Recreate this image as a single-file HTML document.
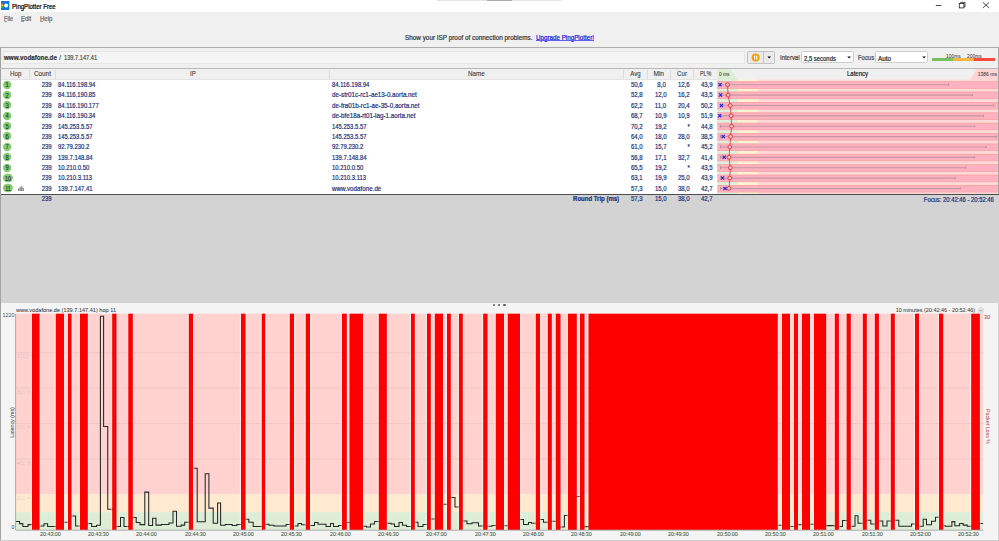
<!DOCTYPE html>
<html><head><meta charset="utf-8"><style>
html,body{margin:0;padding:0;width:999px;height:541px;overflow:hidden;background:#f0f0f0;font-family:"Liberation Sans", sans-serif;}
.b{position:absolute;}
.t{position:absolute;white-space:nowrap;font-family:"Liberation Sans", sans-serif;}
</style></head><body>
<div class="b" style="left:0px;top:0px;width:999px;height:11.5px;background:#fff"></div>
<div class="b" style="left:0px;top:11.5px;width:999px;height:291px;background:#f0f0f0"></div>
<div class="b" style="left:437px;top:0px;width:125px;height:1px;background:#e6e6e6"></div>
<div class="b" style="left:487px;top:0px;width:25px;height:1px;background:#a8a8a8"></div>
<svg class="b" style="left:1px;top:1px" width="9" height="9" viewBox="0 0 9 9"><rect x="0" y="0" width="8.3" height="9" fill="#0c78d8"/><path d="M0 2.1 H2.6 L2.2 3.4 H0 Z" fill="#e0402a"/><rect x="0" y="3.4" width="2.3" height="1.6" fill="#f0c000"/><path d="M0 5 H2.2 L2.6 6.8 H0 Z" fill="#50c020"/><circle cx="5.1" cy="4.6" r="2.0" fill="#fff"/></svg>
<div class="t" style="left:12px;top:3.00px;font-size:7px;line-height:8.40px;color:#000;font-weight:normal;transform-origin:0 50%;transform:scaleX(0.8647);-webkit-text-stroke:0.22px #000;">PingPlotter Free</div>
<svg class="b" style="left:930px;top:0" width="69" height="11" viewBox="0 0 69 11"><line x1="5.8" y1="5.5" x2="11.3" y2="5.5" stroke="#222" stroke-width="0.8"/><rect x="29.3" y="3.4" width="4.6" height="4.5" fill="none" stroke="#222" stroke-width="0.8"/><path d="M30.6 3.4 V2.4 H35 V6.8 H33.9" fill="none" stroke="#222" stroke-width="0.8"/><path d="M52.8 2.4 L59.2 7.9 M59.2 2.4 L52.8 7.9" stroke="#222" stroke-width="0.8"/></svg>
<div class="t" style="left:3.9px;top:15.00px;font-size:6.8px;line-height:8.16px;color:#666;font-weight:normal;transform-origin:0 50%;transform:scaleX(0.8217);-webkit-text-stroke:0.2px #666;">File</div>
<div class="b" style="left:3.9px;top:20.6px;width:3.4px;height:0.7px;background:#999"></div>
<div class="t" style="left:21px;top:15.00px;font-size:6.8px;line-height:8.16px;color:#666;font-weight:normal;transform-origin:0 50%;transform:scaleX(0.8704);-webkit-text-stroke:0.2px #666;">Edit</div>
<div class="b" style="left:21px;top:20.6px;width:3.4px;height:0.7px;background:#999"></div>
<div class="t" style="left:39.6px;top:15.00px;font-size:6.8px;line-height:8.16px;color:#666;font-weight:normal;transform-origin:0 50%;transform:scaleX(0.8867);-webkit-text-stroke:0.2px #666;">Help</div>
<div class="b" style="left:39.6px;top:20.6px;width:3.8px;height:0.7px;background:#999"></div>
<div class="t" style="left:404.9px;top:34.00px;font-size:6.8px;line-height:8.16px;color:#333;font-weight:normal;transform-origin:0 50%;transform:scaleX(0.9356);-webkit-text-stroke:0.2px #333;">Show your ISP proof of connection problems.</div>
<div class="t" style="left:535.6px;top:34.00px;font-size:6.8px;line-height:8.16px;color:#1010e0;font-weight:normal;transform-origin:0 50%;transform:scaleX(0.9190);-webkit-text-stroke:0.2px #1010e0;">Upgrade PingPlotter!</div>
<div class="b" style="left:535.6px;top:39.6px;width:58px;height:0.5px;background:#6060f0"></div>
<div class="b" style="left:0px;top:47px;width:999px;height:0.8px;background:#acacac"></div>
<div class="b" style="left:0px;top:47px;width:1.1px;height:256.2px;background:#a4a4a4"></div>
<div class="b" style="left:3px;top:51px;width:742px;height:13px;background:#f4f4f4;border:0.6px solid #e6e6e6;box-sizing:border-box"></div>
<div class="t" style="left:4.2px;top:54.00px;font-size:6.8px;line-height:8.16px;color:#333;font-weight:bold;transform-origin:0 50%;transform:scaleX(0.9195);-webkit-text-stroke:0.2px #333;">www.vodafone.de</div>
<div class="t" style="left:59.2px;top:54.00px;font-size:6.8px;line-height:8.16px;color:#666;font-weight:normal;transform-origin:0 50%;transform:scaleX(1.1107);-webkit-text-stroke:0.2px #666;">/</div>
<div class="t" style="left:63.7px;top:54.00px;font-size:6.8px;line-height:8.16px;color:#505050;font-weight:normal;transform-origin:0 50%;transform:scaleX(0.8340);-webkit-text-stroke:0.2px #505050;">139.7.147.41</div>
<div class="b" style="left:747.0px;top:51.2px;width:27.8px;height:12.4px;background:#ebebeb;border:0.8px solid #c2c2c2;border-radius:1.5px;box-sizing:border-box"></div>
<div class="b" style="left:763.2px;top:51.5px;width:0.8px;height:11.8px;background:#c4c4c4"></div>
<svg class="b" style="left:750px;top:52px" width="24" height="11" viewBox="0 0 24 11"><circle cx="5.6" cy="5.6" r="4" fill="#f59c0c"/><rect x="4.0" y="3.6" width="1.1" height="4" fill="#fff"/><rect x="6.2" y="3.6" width="1.1" height="4" fill="#fff"/><path d="M17.4 4.6 H21.0 L19.2 6.6 Z" fill="#000"/></svg>
<div class="t" style="left:779.7px;top:54.00px;font-size:6.8px;line-height:8.16px;color:#444;font-weight:normal;transform-origin:0 50%;transform:scaleX(0.8746);-webkit-text-stroke:0.2px #444;">Interval</div>
<div class="b" style="left:801.2px;top:51.3px;width:52.5px;height:12px;background:#fff;border:0.7px solid #cdcdcd;border-radius:1.5px;box-sizing:border-box"></div>
<div class="t" style="left:803.8px;top:55.00px;font-size:6.8px;line-height:8.16px;color:#222;font-weight:normal;transform-origin:0 50%;transform:scaleX(0.8702);-webkit-text-stroke:0.2px #222;">2,5 seconds</div>
<svg class="b" style="left:846px;top:55px" width="6" height="5" viewBox="0 0 6 5"><path d="M1.3 1.6 H4.9 L3.1 3.6 Z" fill="#111"/></svg>
<div class="t" style="left:857.8px;top:54.00px;font-size:6.8px;line-height:8.16px;color:#444;font-weight:normal;transform-origin:0 50%;transform:scaleX(0.8695);-webkit-text-stroke:0.2px #444;">Focus</div>
<div class="b" style="left:875.4px;top:51.4px;width:53px;height:12px;background:#fff;border:0.7px solid #cdcdcd;border-radius:1.5px;box-sizing:border-box"></div>
<div class="t" style="left:877.6px;top:55.00px;font-size:6.8px;line-height:8.16px;color:#222;font-weight:normal;transform-origin:0 50%;transform:scaleX(0.9296);-webkit-text-stroke:0.2px #222;">Auto</div>
<svg class="b" style="left:920.5px;top:55px" width="6" height="5" viewBox="0 0 6 5"><path d="M1.3 1.6 H4.9 L3.1 3.6 Z" fill="#111"/></svg>
<div class="b" style="left:932.3px;top:57.9px;width:20.9px;height:3.4px;background:#78c060"></div>
<div class="b" style="left:953.2px;top:57.9px;width:21px;height:3.4px;background:#fbb440"></div>
<div class="b" style="left:974.2px;top:57.9px;width:20.8px;height:3.4px;background:#f84a40"></div>
<div class="t" style="left:946px;top:53.00px;font-size:5.0px;line-height:6.00px;color:#444;font-weight:normal;transform-origin:0 50%;transform:scaleX(0.9790);-webkit-text-stroke:0.05px #444;">100ms</div>
<div class="t" style="left:966.5px;top:53.00px;font-size:5.0px;line-height:6.00px;color:#444;font-weight:normal;transform-origin:0 50%;transform:scaleX(0.9790);-webkit-text-stroke:0.05px #444;">200ms</div>
<div class="b" style="left:0px;top:68px;width:999px;height:0.9px;background:#b8b8b8"></div>
<div class="b" style="left:1.2px;top:69.1px;width:997.8px;height:10.6px;background:#f0f0f0"></div>
<div class="b" style="left:1.2px;top:79.7px;width:716px;height:114.5px;background:#fff"></div>
<div class="b" style="left:29.2px;top:69.5px;width:0.7px;height:10px;background:#dcdcdc"></div>
<div class="b" style="left:55.2px;top:69.5px;width:0.7px;height:10px;background:#dcdcdc"></div>
<div class="b" style="left:329.2px;top:69.5px;width:0.7px;height:10px;background:#dcdcdc"></div>
<div class="b" style="left:623.1px;top:69.5px;width:0.7px;height:10px;background:#dcdcdc"></div>
<div class="b" style="left:647.1px;top:69.5px;width:0.7px;height:10px;background:#dcdcdc"></div>
<div class="b" style="left:670.2px;top:69.5px;width:0.7px;height:10px;background:#dcdcdc"></div>
<div class="b" style="left:693.3px;top:69.5px;width:0.7px;height:10px;background:#dcdcdc"></div>
<div class="b" style="left:1.2px;top:79.4px;width:716px;height:0.5px;background:#e4e4e4"></div>
<div class="t" style="left:9.6px;top:70.00px;font-size:6.8px;line-height:8.16px;color:#3a3a3a;font-weight:normal;transform-origin:0 50%;transform:scaleX(0.9143);-webkit-text-stroke:0.1px #3a3a3a;">Hop</div>
<div class="t" style="left:33.6px;top:70.00px;font-size:6.8px;line-height:8.16px;color:#3a3a3a;font-weight:normal;transform-origin:0 50%;transform:scaleX(0.9316);-webkit-text-stroke:0.1px #3a3a3a;">Count</div>
<div class="t" style="left:-7.50px;width:400px;text-align:center;top:70.00px;font-size:6.8px;line-height:8.16px;color:#3a3a3a;font-weight:normal;transform-origin:50% 50%;transform:scaleX(0.9000);-webkit-text-stroke:0.1px #3a3a3a;">IP</div>
<div class="t" style="left:467.5px;top:70.00px;font-size:6.8px;line-height:8.16px;color:#3a3a3a;font-weight:normal;transform-origin:0 50%;transform:scaleX(0.9233);-webkit-text-stroke:0.1px #3a3a3a;">Name</div>
<div class="t" style="right:358.50px;top:70.00px;font-size:6.8px;line-height:8.16px;color:#3a3a3a;font-weight:normal;transform-origin:100% 50%;transform:scaleX(0.8884);-webkit-text-stroke:0.1px #3a3a3a;">Avg</div>
<div class="t" style="right:335.00px;top:70.00px;font-size:6.8px;line-height:8.16px;color:#3a3a3a;font-weight:normal;transform-origin:100% 50%;transform:scaleX(0.9586);-webkit-text-stroke:0.1px #3a3a3a;">Min</div>
<div class="t" style="right:311.90px;top:70.00px;font-size:6.8px;line-height:8.16px;color:#3a3a3a;font-weight:normal;transform-origin:100% 50%;transform:scaleX(0.9039);-webkit-text-stroke:0.1px #3a3a3a;">Cur</div>
<div class="t" style="right:287.60px;top:70.00px;font-size:6.8px;line-height:8.16px;color:#3a3a3a;font-weight:normal;transform-origin:100% 50%;transform:scaleX(0.7939);-webkit-text-stroke:0.1px #3a3a3a;">PL%</div>
<svg class="b" style="left:2px;top:79.60px" width="11" height="10" viewBox="0 0 11 10"><circle cx="5.1" cy="5" r="4.15" fill="#84cc6a"/></svg>
<div class="t" style="left:-192.90px;width:400px;text-align:center;top:81.00px;font-size:6.8px;line-height:8.16px;color:#1c2e5c;font-weight:normal;transform-origin:50% 50%;transform:scaleX(0.8500);-webkit-text-stroke:0.15px #1c2e5c;">1</div>
<div class="t" style="right:947.20px;top:81.00px;font-size:7px;line-height:8.40px;color:#22307a;font-weight:normal;transform-origin:100% 50%;transform:scaleX(0.8600);-webkit-text-stroke:0.2px #22307a;">239</div>
<div class="t" style="left:57.7px;top:81.00px;font-size:7px;line-height:8.40px;color:#22307a;font-weight:normal;transform-origin:0 50%;transform:scaleX(0.8450);-webkit-text-stroke:0.2px #22307a;">84.116.198.94</div>
<div class="t" style="left:331.5px;top:81.00px;font-size:7px;line-height:8.40px;color:#22307a;font-weight:normal;transform-origin:0 50%;transform:scaleX(0.8450);-webkit-text-stroke:0.2px #22307a;">84.116.198.94</div>
<div class="t" style="right:355.90px;top:81.00px;font-size:7px;line-height:8.40px;color:#22307a;font-weight:normal;transform-origin:100% 50%;transform:scaleX(0.8600);-webkit-text-stroke:0.2px #22307a;">50,6</div>
<div class="t" style="right:332.80px;top:81.00px;font-size:7px;line-height:8.40px;color:#22307a;font-weight:normal;transform-origin:100% 50%;transform:scaleX(0.8600);-webkit-text-stroke:0.2px #22307a;">8,0</div>
<div class="t" style="right:309.10px;top:81.00px;font-size:7px;line-height:8.40px;color:#22307a;font-weight:normal;transform-origin:100% 50%;transform:scaleX(0.8600);-webkit-text-stroke:0.2px #22307a;">12,6</div>
<div class="t" style="right:286.00px;top:81.00px;font-size:7px;line-height:8.40px;color:#22307a;font-weight:normal;transform-origin:100% 50%;transform:scaleX(0.8600);-webkit-text-stroke:0.2px #22307a;">43,9</div>
<svg class="b" style="left:2px;top:89.97px" width="11" height="10" viewBox="0 0 11 10"><circle cx="5.1" cy="5" r="4.15" fill="#84cc6a"/></svg>
<div class="t" style="left:-192.90px;width:400px;text-align:center;top:92.00px;font-size:6.8px;line-height:8.16px;color:#1c2e5c;font-weight:normal;transform-origin:50% 50%;transform:scaleX(0.8500);-webkit-text-stroke:0.15px #1c2e5c;">2</div>
<div class="t" style="right:947.20px;top:91.00px;font-size:7px;line-height:8.40px;color:#22307a;font-weight:normal;transform-origin:100% 50%;transform:scaleX(0.8600);-webkit-text-stroke:0.2px #22307a;">239</div>
<div class="t" style="left:57.7px;top:91.00px;font-size:7px;line-height:8.40px;color:#22307a;font-weight:normal;transform-origin:0 50%;transform:scaleX(0.8450);-webkit-text-stroke:0.2px #22307a;">84.116.190.85</div>
<div class="t" style="left:331.5px;top:91.00px;font-size:7px;line-height:8.40px;color:#22307a;font-weight:normal;transform-origin:0 50%;transform:scaleX(0.8930);-webkit-text-stroke:0.2px #22307a;">de-str01c-rc1-ae13-0.aorta.net</div>
<div class="t" style="right:355.90px;top:91.00px;font-size:7px;line-height:8.40px;color:#22307a;font-weight:normal;transform-origin:100% 50%;transform:scaleX(0.8600);-webkit-text-stroke:0.2px #22307a;">52,8</div>
<div class="t" style="right:332.80px;top:91.00px;font-size:7px;line-height:8.40px;color:#22307a;font-weight:normal;transform-origin:100% 50%;transform:scaleX(0.8600);-webkit-text-stroke:0.2px #22307a;">12,0</div>
<div class="t" style="right:309.10px;top:91.00px;font-size:7px;line-height:8.40px;color:#22307a;font-weight:normal;transform-origin:100% 50%;transform:scaleX(0.8600);-webkit-text-stroke:0.2px #22307a;">16,2</div>
<div class="t" style="right:286.00px;top:91.00px;font-size:7px;line-height:8.40px;color:#22307a;font-weight:normal;transform-origin:100% 50%;transform:scaleX(0.8600);-webkit-text-stroke:0.2px #22307a;">43,5</div>
<svg class="b" style="left:2px;top:100.35px" width="11" height="10" viewBox="0 0 11 10"><circle cx="5.1" cy="5" r="4.15" fill="#84cc6a"/></svg>
<div class="t" style="left:-192.90px;width:400px;text-align:center;top:102.00px;font-size:6.8px;line-height:8.16px;color:#1c2e5c;font-weight:normal;transform-origin:50% 50%;transform:scaleX(0.8500);-webkit-text-stroke:0.15px #1c2e5c;">3</div>
<div class="t" style="right:947.20px;top:102.00px;font-size:7px;line-height:8.40px;color:#22307a;font-weight:normal;transform-origin:100% 50%;transform:scaleX(0.8600);-webkit-text-stroke:0.2px #22307a;">239</div>
<div class="t" style="left:57.7px;top:102.00px;font-size:7px;line-height:8.40px;color:#22307a;font-weight:normal;transform-origin:0 50%;transform:scaleX(0.8450);-webkit-text-stroke:0.2px #22307a;">84.116.190.177</div>
<div class="t" style="left:331.5px;top:102.00px;font-size:7px;line-height:8.40px;color:#22307a;font-weight:normal;transform-origin:0 50%;transform:scaleX(0.8930);-webkit-text-stroke:0.2px #22307a;">de-fra01b-rc1-ae-35-0.aorta.net</div>
<div class="t" style="right:355.90px;top:102.00px;font-size:7px;line-height:8.40px;color:#22307a;font-weight:normal;transform-origin:100% 50%;transform:scaleX(0.8600);-webkit-text-stroke:0.2px #22307a;">62,2</div>
<div class="t" style="right:332.80px;top:102.00px;font-size:7px;line-height:8.40px;color:#22307a;font-weight:normal;transform-origin:100% 50%;transform:scaleX(0.8600);-webkit-text-stroke:0.2px #22307a;">11,0</div>
<div class="t" style="right:309.10px;top:102.00px;font-size:7px;line-height:8.40px;color:#22307a;font-weight:normal;transform-origin:100% 50%;transform:scaleX(0.8600);-webkit-text-stroke:0.2px #22307a;">20,4</div>
<div class="t" style="right:286.00px;top:102.00px;font-size:7px;line-height:8.40px;color:#22307a;font-weight:normal;transform-origin:100% 50%;transform:scaleX(0.8600);-webkit-text-stroke:0.2px #22307a;">50,2</div>
<svg class="b" style="left:2px;top:110.72px" width="11" height="10" viewBox="0 0 11 10"><circle cx="5.1" cy="5" r="4.15" fill="#84cc6a"/></svg>
<div class="t" style="left:-192.90px;width:400px;text-align:center;top:112.00px;font-size:6.8px;line-height:8.16px;color:#1c2e5c;font-weight:normal;transform-origin:50% 50%;transform:scaleX(0.8500);-webkit-text-stroke:0.15px #1c2e5c;">4</div>
<div class="t" style="right:947.20px;top:112.00px;font-size:7px;line-height:8.40px;color:#22307a;font-weight:normal;transform-origin:100% 50%;transform:scaleX(0.8600);-webkit-text-stroke:0.2px #22307a;">239</div>
<div class="t" style="left:57.7px;top:112.00px;font-size:7px;line-height:8.40px;color:#22307a;font-weight:normal;transform-origin:0 50%;transform:scaleX(0.8450);-webkit-text-stroke:0.2px #22307a;">84.116.190.34</div>
<div class="t" style="left:331.5px;top:112.00px;font-size:7px;line-height:8.40px;color:#22307a;font-weight:normal;transform-origin:0 50%;transform:scaleX(0.8930);-webkit-text-stroke:0.2px #22307a;">de-bfe18a-rt01-lag-1.aorta.net</div>
<div class="t" style="right:355.90px;top:112.00px;font-size:7px;line-height:8.40px;color:#22307a;font-weight:normal;transform-origin:100% 50%;transform:scaleX(0.8600);-webkit-text-stroke:0.2px #22307a;">68,7</div>
<div class="t" style="right:332.80px;top:112.00px;font-size:7px;line-height:8.40px;color:#22307a;font-weight:normal;transform-origin:100% 50%;transform:scaleX(0.8600);-webkit-text-stroke:0.2px #22307a;">10,9</div>
<div class="t" style="right:309.10px;top:112.00px;font-size:7px;line-height:8.40px;color:#22307a;font-weight:normal;transform-origin:100% 50%;transform:scaleX(0.8600);-webkit-text-stroke:0.2px #22307a;">10,9</div>
<div class="t" style="right:286.00px;top:112.00px;font-size:7px;line-height:8.40px;color:#22307a;font-weight:normal;transform-origin:100% 50%;transform:scaleX(0.8600);-webkit-text-stroke:0.2px #22307a;">51,9</div>
<svg class="b" style="left:2px;top:121.10px" width="11" height="10" viewBox="0 0 11 10"><circle cx="5.1" cy="5" r="4.15" fill="#84cc6a"/></svg>
<div class="t" style="left:-192.90px;width:400px;text-align:center;top:123.00px;font-size:6.8px;line-height:8.16px;color:#1c2e5c;font-weight:normal;transform-origin:50% 50%;transform:scaleX(0.8500);-webkit-text-stroke:0.15px #1c2e5c;">5</div>
<div class="t" style="right:947.20px;top:123.00px;font-size:7px;line-height:8.40px;color:#22307a;font-weight:normal;transform-origin:100% 50%;transform:scaleX(0.8600);-webkit-text-stroke:0.2px #22307a;">239</div>
<div class="t" style="left:57.7px;top:123.00px;font-size:7px;line-height:8.40px;color:#22307a;font-weight:normal;transform-origin:0 50%;transform:scaleX(0.8450);-webkit-text-stroke:0.2px #22307a;">145.253.5.57</div>
<div class="t" style="left:331.5px;top:123.00px;font-size:7px;line-height:8.40px;color:#22307a;font-weight:normal;transform-origin:0 50%;transform:scaleX(0.8450);-webkit-text-stroke:0.2px #22307a;">145.253.5.57</div>
<div class="t" style="right:355.90px;top:123.00px;font-size:7px;line-height:8.40px;color:#22307a;font-weight:normal;transform-origin:100% 50%;transform:scaleX(0.8600);-webkit-text-stroke:0.2px #22307a;">70,2</div>
<div class="t" style="right:332.80px;top:123.00px;font-size:7px;line-height:8.40px;color:#22307a;font-weight:normal;transform-origin:100% 50%;transform:scaleX(0.8600);-webkit-text-stroke:0.2px #22307a;">19,2</div>
<div class="t" style="right:309.10px;top:123.00px;font-size:7px;line-height:8.40px;color:#22307a;font-weight:normal;transform-origin:100% 50%;transform:scaleX(0.8600);-webkit-text-stroke:0.2px #22307a;">*</div>
<div class="t" style="right:286.00px;top:123.00px;font-size:7px;line-height:8.40px;color:#22307a;font-weight:normal;transform-origin:100% 50%;transform:scaleX(0.8600);-webkit-text-stroke:0.2px #22307a;">44,8</div>
<svg class="b" style="left:2px;top:131.47px" width="11" height="10" viewBox="0 0 11 10"><circle cx="5.1" cy="5" r="4.15" fill="#84cc6a"/></svg>
<div class="t" style="left:-192.90px;width:400px;text-align:center;top:133.00px;font-size:6.8px;line-height:8.16px;color:#1c2e5c;font-weight:normal;transform-origin:50% 50%;transform:scaleX(0.8500);-webkit-text-stroke:0.15px #1c2e5c;">6</div>
<div class="t" style="right:947.20px;top:133.00px;font-size:7px;line-height:8.40px;color:#22307a;font-weight:normal;transform-origin:100% 50%;transform:scaleX(0.8600);-webkit-text-stroke:0.2px #22307a;">239</div>
<div class="t" style="left:57.7px;top:133.00px;font-size:7px;line-height:8.40px;color:#22307a;font-weight:normal;transform-origin:0 50%;transform:scaleX(0.8450);-webkit-text-stroke:0.2px #22307a;">145.253.5.57</div>
<div class="t" style="left:331.5px;top:133.00px;font-size:7px;line-height:8.40px;color:#22307a;font-weight:normal;transform-origin:0 50%;transform:scaleX(0.8450);-webkit-text-stroke:0.2px #22307a;">145.253.5.57</div>
<div class="t" style="right:355.90px;top:133.00px;font-size:7px;line-height:8.40px;color:#22307a;font-weight:normal;transform-origin:100% 50%;transform:scaleX(0.8600);-webkit-text-stroke:0.2px #22307a;">64,0</div>
<div class="t" style="right:332.80px;top:133.00px;font-size:7px;line-height:8.40px;color:#22307a;font-weight:normal;transform-origin:100% 50%;transform:scaleX(0.8600);-webkit-text-stroke:0.2px #22307a;">18,0</div>
<div class="t" style="right:309.10px;top:133.00px;font-size:7px;line-height:8.40px;color:#22307a;font-weight:normal;transform-origin:100% 50%;transform:scaleX(0.8600);-webkit-text-stroke:0.2px #22307a;">28,0</div>
<div class="t" style="right:286.00px;top:133.00px;font-size:7px;line-height:8.40px;color:#22307a;font-weight:normal;transform-origin:100% 50%;transform:scaleX(0.8600);-webkit-text-stroke:0.2px #22307a;">38,5</div>
<svg class="b" style="left:2px;top:141.85px" width="11" height="10" viewBox="0 0 11 10"><circle cx="5.1" cy="5" r="4.15" fill="#84cc6a"/></svg>
<div class="t" style="left:-192.90px;width:400px;text-align:center;top:143.00px;font-size:6.8px;line-height:8.16px;color:#1c2e5c;font-weight:normal;transform-origin:50% 50%;transform:scaleX(0.8500);-webkit-text-stroke:0.15px #1c2e5c;">7</div>
<div class="t" style="right:947.20px;top:143.00px;font-size:7px;line-height:8.40px;color:#22307a;font-weight:normal;transform-origin:100% 50%;transform:scaleX(0.8600);-webkit-text-stroke:0.2px #22307a;">239</div>
<div class="t" style="left:57.7px;top:143.00px;font-size:7px;line-height:8.40px;color:#22307a;font-weight:normal;transform-origin:0 50%;transform:scaleX(0.8450);-webkit-text-stroke:0.2px #22307a;">92.79.230.2</div>
<div class="t" style="left:331.5px;top:143.00px;font-size:7px;line-height:8.40px;color:#22307a;font-weight:normal;transform-origin:0 50%;transform:scaleX(0.8450);-webkit-text-stroke:0.2px #22307a;">92.79.230.2</div>
<div class="t" style="right:355.90px;top:143.00px;font-size:7px;line-height:8.40px;color:#22307a;font-weight:normal;transform-origin:100% 50%;transform:scaleX(0.8600);-webkit-text-stroke:0.2px #22307a;">61,0</div>
<div class="t" style="right:332.80px;top:143.00px;font-size:7px;line-height:8.40px;color:#22307a;font-weight:normal;transform-origin:100% 50%;transform:scaleX(0.8600);-webkit-text-stroke:0.2px #22307a;">15,7</div>
<div class="t" style="right:309.10px;top:143.00px;font-size:7px;line-height:8.40px;color:#22307a;font-weight:normal;transform-origin:100% 50%;transform:scaleX(0.8600);-webkit-text-stroke:0.2px #22307a;">*</div>
<div class="t" style="right:286.00px;top:143.00px;font-size:7px;line-height:8.40px;color:#22307a;font-weight:normal;transform-origin:100% 50%;transform:scaleX(0.8600);-webkit-text-stroke:0.2px #22307a;">45,2</div>
<svg class="b" style="left:2px;top:152.22px" width="11" height="10" viewBox="0 0 11 10"><circle cx="5.1" cy="5" r="4.15" fill="#84cc6a"/></svg>
<div class="t" style="left:-192.90px;width:400px;text-align:center;top:154.00px;font-size:6.8px;line-height:8.16px;color:#1c2e5c;font-weight:normal;transform-origin:50% 50%;transform:scaleX(0.8500);-webkit-text-stroke:0.15px #1c2e5c;">8</div>
<div class="t" style="right:947.20px;top:154.00px;font-size:7px;line-height:8.40px;color:#22307a;font-weight:normal;transform-origin:100% 50%;transform:scaleX(0.8600);-webkit-text-stroke:0.2px #22307a;">239</div>
<div class="t" style="left:57.7px;top:154.00px;font-size:7px;line-height:8.40px;color:#22307a;font-weight:normal;transform-origin:0 50%;transform:scaleX(0.8450);-webkit-text-stroke:0.2px #22307a;">139.7.148.84</div>
<div class="t" style="left:331.5px;top:154.00px;font-size:7px;line-height:8.40px;color:#22307a;font-weight:normal;transform-origin:0 50%;transform:scaleX(0.8450);-webkit-text-stroke:0.2px #22307a;">139.7.148.84</div>
<div class="t" style="right:355.90px;top:154.00px;font-size:7px;line-height:8.40px;color:#22307a;font-weight:normal;transform-origin:100% 50%;transform:scaleX(0.8600);-webkit-text-stroke:0.2px #22307a;">56,8</div>
<div class="t" style="right:332.80px;top:154.00px;font-size:7px;line-height:8.40px;color:#22307a;font-weight:normal;transform-origin:100% 50%;transform:scaleX(0.8600);-webkit-text-stroke:0.2px #22307a;">17,1</div>
<div class="t" style="right:309.10px;top:154.00px;font-size:7px;line-height:8.40px;color:#22307a;font-weight:normal;transform-origin:100% 50%;transform:scaleX(0.8600);-webkit-text-stroke:0.2px #22307a;">32,7</div>
<div class="t" style="right:286.00px;top:154.00px;font-size:7px;line-height:8.40px;color:#22307a;font-weight:normal;transform-origin:100% 50%;transform:scaleX(0.8600);-webkit-text-stroke:0.2px #22307a;">41,4</div>
<svg class="b" style="left:2px;top:162.60px" width="11" height="10" viewBox="0 0 11 10"><circle cx="5.1" cy="5" r="4.15" fill="#84cc6a"/></svg>
<div class="t" style="left:-192.90px;width:400px;text-align:center;top:164.00px;font-size:6.8px;line-height:8.16px;color:#1c2e5c;font-weight:normal;transform-origin:50% 50%;transform:scaleX(0.8500);-webkit-text-stroke:0.15px #1c2e5c;">9</div>
<div class="t" style="right:947.20px;top:164.00px;font-size:7px;line-height:8.40px;color:#22307a;font-weight:normal;transform-origin:100% 50%;transform:scaleX(0.8600);-webkit-text-stroke:0.2px #22307a;">239</div>
<div class="t" style="left:57.7px;top:164.00px;font-size:7px;line-height:8.40px;color:#22307a;font-weight:normal;transform-origin:0 50%;transform:scaleX(0.8450);-webkit-text-stroke:0.2px #22307a;">10.210.0.50</div>
<div class="t" style="left:331.5px;top:164.00px;font-size:7px;line-height:8.40px;color:#22307a;font-weight:normal;transform-origin:0 50%;transform:scaleX(0.8450);-webkit-text-stroke:0.2px #22307a;">10.210.0.50</div>
<div class="t" style="right:355.90px;top:164.00px;font-size:7px;line-height:8.40px;color:#22307a;font-weight:normal;transform-origin:100% 50%;transform:scaleX(0.8600);-webkit-text-stroke:0.2px #22307a;">65,5</div>
<div class="t" style="right:332.80px;top:164.00px;font-size:7px;line-height:8.40px;color:#22307a;font-weight:normal;transform-origin:100% 50%;transform:scaleX(0.8600);-webkit-text-stroke:0.2px #22307a;">19,2</div>
<div class="t" style="right:309.10px;top:164.00px;font-size:7px;line-height:8.40px;color:#22307a;font-weight:normal;transform-origin:100% 50%;transform:scaleX(0.8600);-webkit-text-stroke:0.2px #22307a;">*</div>
<div class="t" style="right:286.00px;top:164.00px;font-size:7px;line-height:8.40px;color:#22307a;font-weight:normal;transform-origin:100% 50%;transform:scaleX(0.8600);-webkit-text-stroke:0.2px #22307a;">43,5</div>
<svg class="b" style="left:2px;top:172.97px" width="12" height="10" viewBox="0 0 12 10"><rect x="0.9" y="0.8" width="10" height="8.4" rx="4.2" fill="#84cc6a"/></svg>
<div class="t" style="left:-192.10px;width:400px;text-align:center;top:175.00px;font-size:6.8px;line-height:8.16px;color:#1c2e5c;font-weight:normal;transform-origin:50% 50%;transform:scaleX(0.8000);-webkit-text-stroke:0.15px #1c2e5c;">10</div>
<div class="t" style="right:947.20px;top:174.00px;font-size:7px;line-height:8.40px;color:#22307a;font-weight:normal;transform-origin:100% 50%;transform:scaleX(0.8600);-webkit-text-stroke:0.2px #22307a;">239</div>
<div class="t" style="left:57.7px;top:174.00px;font-size:7px;line-height:8.40px;color:#22307a;font-weight:normal;transform-origin:0 50%;transform:scaleX(0.8450);-webkit-text-stroke:0.2px #22307a;">10.210.3.113</div>
<div class="t" style="left:331.5px;top:174.00px;font-size:7px;line-height:8.40px;color:#22307a;font-weight:normal;transform-origin:0 50%;transform:scaleX(0.8450);-webkit-text-stroke:0.2px #22307a;">10.210.3.113</div>
<div class="t" style="right:355.90px;top:174.00px;font-size:7px;line-height:8.40px;color:#22307a;font-weight:normal;transform-origin:100% 50%;transform:scaleX(0.8600);-webkit-text-stroke:0.2px #22307a;">63,1</div>
<div class="t" style="right:332.80px;top:174.00px;font-size:7px;line-height:8.40px;color:#22307a;font-weight:normal;transform-origin:100% 50%;transform:scaleX(0.8600);-webkit-text-stroke:0.2px #22307a;">19,9</div>
<div class="t" style="right:309.10px;top:174.00px;font-size:7px;line-height:8.40px;color:#22307a;font-weight:normal;transform-origin:100% 50%;transform:scaleX(0.8600);-webkit-text-stroke:0.2px #22307a;">25,0</div>
<div class="t" style="right:286.00px;top:174.00px;font-size:7px;line-height:8.40px;color:#22307a;font-weight:normal;transform-origin:100% 50%;transform:scaleX(0.8600);-webkit-text-stroke:0.2px #22307a;">43,9</div>
<svg class="b" style="left:2px;top:183.35px" width="12" height="10" viewBox="0 0 12 10"><rect x="0.9" y="0.8" width="10" height="8.4" rx="4.2" fill="#84cc6a"/></svg>
<div class="t" style="left:-192.10px;width:400px;text-align:center;top:185.00px;font-size:6.8px;line-height:8.16px;color:#1c2e5c;font-weight:normal;transform-origin:50% 50%;transform:scaleX(0.8000);-webkit-text-stroke:0.15px #1c2e5c;">11</div>
<div class="t" style="right:947.20px;top:185.00px;font-size:7px;line-height:8.40px;color:#22307a;font-weight:normal;transform-origin:100% 50%;transform:scaleX(0.8600);-webkit-text-stroke:0.2px #22307a;">239</div>
<div class="t" style="left:57.7px;top:185.00px;font-size:7px;line-height:8.40px;color:#22307a;font-weight:normal;transform-origin:0 50%;transform:scaleX(0.8450);-webkit-text-stroke:0.2px #22307a;">139.7.147.41</div>
<div class="t" style="left:331.5px;top:185.00px;font-size:7px;line-height:8.40px;color:#22307a;font-weight:normal;transform-origin:0 50%;transform:scaleX(0.8930);-webkit-text-stroke:0.2px #22307a;">www.vodafone.de</div>
<div class="t" style="right:355.90px;top:185.00px;font-size:7px;line-height:8.40px;color:#22307a;font-weight:normal;transform-origin:100% 50%;transform:scaleX(0.8600);-webkit-text-stroke:0.2px #22307a;">57,3</div>
<div class="t" style="right:332.80px;top:185.00px;font-size:7px;line-height:8.40px;color:#22307a;font-weight:normal;transform-origin:100% 50%;transform:scaleX(0.8600);-webkit-text-stroke:0.2px #22307a;">15,0</div>
<div class="t" style="right:309.10px;top:185.00px;font-size:7px;line-height:8.40px;color:#22307a;font-weight:normal;transform-origin:100% 50%;transform:scaleX(0.8600);-webkit-text-stroke:0.2px #22307a;">38,0</div>
<div class="t" style="right:286.00px;top:185.00px;font-size:7px;line-height:8.40px;color:#22307a;font-weight:normal;transform-origin:100% 50%;transform:scaleX(0.8600);-webkit-text-stroke:0.2px #22307a;">42,7</div>
<svg class="b" style="left:18px;top:186px" width="6" height="5" viewBox="0 0 6 5"><rect x="0.1" y="2.6" width="1.2" height="2.4" fill="#7a7a7a"/><rect x="1.6" y="1.3" width="1.2" height="3.7" fill="#7a7a7a"/><rect x="3.1" y="0.2" width="1.2" height="4.8" fill="#7a7a7a"/><rect x="4.6" y="1.8" width="1.2" height="3.2" fill="#7a7a7a"/></svg>
<svg class="b" style="left:0;top:0" width="999" height="200" viewBox="0 0 999 200"><polygon points="717.3,69 730.6,69 738,80.6 717.3,80.6" fill="#dcefd6"/><polygon points="977,69 998,69 998,80.6 969.5,80.6" fill="#ffd4d4"/><rect x="717.3" y="79.6" width="20.7" height="1.4" fill="#dcf0dc"/><rect x="738" y="79.6" width="20.2" height="1.4" fill="#fff2d0"/><rect x="758.2" y="79.6" width="240" height="1.4" fill="#ffd8d8"/><rect x="717.3" y="81.30" width="280.7" height="7.5" fill="#ffb1c1"/><rect x="717.3" y="81.30" width="280.7" height="0.9" fill="#f5a8a2"/><rect x="717.3" y="88.00" width="280.7" height="0.9" fill="#f5a8a2"/><rect x="717.3" y="88.90" width="20.7" height="2.78" fill="#dcf0dc"/><rect x="738" y="88.90" width="20.2" height="2.78" fill="#fff2d0"/><rect x="758.2" y="88.90" width="240" height="2.78" fill="#ffd8d8"/><line x1="721" y1="84.70" x2="948.6" y2="84.70" stroke="#c6979f" stroke-width="1.15"/><line x1="948.6" y1="83.50" x2="948.6" y2="85.90" stroke="#b08a90" stroke-width="0.8"/><line x1="720.6" y1="83.20" x2="720.6" y2="86.20" stroke="#a08890" stroke-width="0.8"/><path d="M718.4 83.10 L721.6 86.30 M721.6 83.10 L718.4 86.30" stroke="#2020e0" stroke-width="1.1"/><rect x="717.3" y="91.67" width="280.7" height="7.5" fill="#ffb1c1"/><rect x="717.3" y="91.67" width="280.7" height="0.9" fill="#f5a8a2"/><rect x="717.3" y="98.38" width="280.7" height="0.9" fill="#f5a8a2"/><rect x="717.3" y="99.27" width="20.7" height="2.78" fill="#dcf0dc"/><rect x="738" y="99.27" width="20.2" height="2.78" fill="#fff2d0"/><rect x="758.2" y="99.27" width="240" height="2.78" fill="#ffd8d8"/><line x1="721" y1="95.08" x2="972.5" y2="95.08" stroke="#c6979f" stroke-width="1.15"/><line x1="972.5" y1="93.88" x2="972.5" y2="96.28" stroke="#b08a90" stroke-width="0.8"/><line x1="720.6" y1="93.58" x2="720.6" y2="96.58" stroke="#a08890" stroke-width="0.8"/><path d="M718.9 93.48 L722.1 96.67 M722.1 93.48 L718.9 96.67" stroke="#2020e0" stroke-width="1.1"/><rect x="717.3" y="102.05" width="280.7" height="7.5" fill="#ffb1c1"/><rect x="717.3" y="102.05" width="280.7" height="0.9" fill="#f5a8a2"/><rect x="717.3" y="108.75" width="280.7" height="0.9" fill="#f5a8a2"/><rect x="717.3" y="109.65" width="20.7" height="2.78" fill="#dcf0dc"/><rect x="738" y="109.65" width="20.2" height="2.78" fill="#fff2d0"/><rect x="758.2" y="109.65" width="240" height="2.78" fill="#ffd8d8"/><line x1="721" y1="105.45" x2="993.5" y2="105.45" stroke="#c6979f" stroke-width="1.15"/><line x1="993.5" y1="104.25" x2="993.5" y2="106.65" stroke="#b08a90" stroke-width="0.8"/><line x1="720.6" y1="103.95" x2="720.6" y2="106.95" stroke="#a08890" stroke-width="0.8"/><path d="M719.8 103.85 L723.0 107.05 M723.0 103.85 L719.8 107.05" stroke="#2020e0" stroke-width="1.1"/><rect x="717.3" y="112.42" width="280.7" height="7.5" fill="#ffb1c1"/><rect x="717.3" y="112.42" width="280.7" height="0.9" fill="#f5a8a2"/><rect x="717.3" y="119.12" width="280.7" height="0.9" fill="#f5a8a2"/><rect x="717.3" y="120.02" width="20.7" height="2.78" fill="#dcf0dc"/><rect x="738" y="120.02" width="20.2" height="2.78" fill="#fff2d0"/><rect x="758.2" y="120.02" width="240" height="2.78" fill="#ffd8d8"/><line x1="721" y1="115.83" x2="983.4" y2="115.83" stroke="#c6979f" stroke-width="1.15"/><line x1="983.4" y1="114.62" x2="983.4" y2="117.03" stroke="#b08a90" stroke-width="0.8"/><line x1="720.6" y1="114.33" x2="720.6" y2="117.33" stroke="#a08890" stroke-width="0.8"/><path d="M718.1 114.23 L721.3000000000001 117.42 M721.3000000000001 114.23 L718.1 117.42" stroke="#2020e0" stroke-width="1.1"/><rect x="717.3" y="122.80" width="280.7" height="7.5" fill="#ffb1c1"/><rect x="717.3" y="122.80" width="280.7" height="0.9" fill="#f5a8a2"/><rect x="717.3" y="129.50" width="280.7" height="0.9" fill="#f5a8a2"/><rect x="717.3" y="130.40" width="20.7" height="2.78" fill="#dcf0dc"/><rect x="738" y="130.40" width="20.2" height="2.78" fill="#fff2d0"/><rect x="758.2" y="130.40" width="240" height="2.78" fill="#ffd8d8"/><line x1="721" y1="126.20" x2="974.7" y2="126.20" stroke="#c6979f" stroke-width="1.15"/><line x1="974.7" y1="125.00" x2="974.7" y2="127.40" stroke="#b08a90" stroke-width="0.8"/><line x1="720.6" y1="124.70" x2="720.6" y2="127.70" stroke="#a08890" stroke-width="0.8"/><rect x="717.3" y="133.18" width="280.7" height="7.5" fill="#ffb1c1"/><rect x="717.3" y="133.18" width="280.7" height="0.9" fill="#f5a8a2"/><rect x="717.3" y="139.88" width="280.7" height="0.9" fill="#f5a8a2"/><rect x="717.3" y="140.78" width="20.7" height="2.78" fill="#dcf0dc"/><rect x="738" y="140.78" width="20.2" height="2.78" fill="#fff2d0"/><rect x="758.2" y="140.78" width="240" height="2.78" fill="#ffd8d8"/><line x1="721" y1="136.58" x2="996.4" y2="136.58" stroke="#c6979f" stroke-width="1.15"/><line x1="996.4" y1="135.38" x2="996.4" y2="137.78" stroke="#b08a90" stroke-width="0.8"/><line x1="720.6" y1="135.08" x2="720.6" y2="138.08" stroke="#a08890" stroke-width="0.8"/><path d="M721.6 134.98 L724.8000000000001 138.18 M724.8000000000001 134.98 L721.6 138.18" stroke="#2020e0" stroke-width="1.1"/><rect x="717.3" y="143.55" width="280.7" height="7.5" fill="#ffb1c1"/><rect x="717.3" y="143.55" width="280.7" height="0.9" fill="#f5a8a2"/><rect x="717.3" y="150.25" width="280.7" height="0.9" fill="#f5a8a2"/><rect x="717.3" y="151.15" width="20.7" height="2.78" fill="#dcf0dc"/><rect x="738" y="151.15" width="20.2" height="2.78" fill="#fff2d0"/><rect x="758.2" y="151.15" width="240" height="2.78" fill="#ffd8d8"/><line x1="721" y1="146.95" x2="986.2" y2="146.95" stroke="#c6979f" stroke-width="1.15"/><line x1="986.2" y1="145.75" x2="986.2" y2="148.15" stroke="#b08a90" stroke-width="0.8"/><line x1="720.6" y1="145.45" x2="720.6" y2="148.45" stroke="#a08890" stroke-width="0.8"/><rect x="717.3" y="153.93" width="280.7" height="7.5" fill="#ffb1c1"/><rect x="717.3" y="153.93" width="280.7" height="0.9" fill="#f5a8a2"/><rect x="717.3" y="160.62" width="280.7" height="0.9" fill="#f5a8a2"/><rect x="717.3" y="161.53" width="20.7" height="2.78" fill="#dcf0dc"/><rect x="738" y="161.53" width="20.2" height="2.78" fill="#fff2d0"/><rect x="758.2" y="161.53" width="240" height="2.78" fill="#ffd8d8"/><line x1="721" y1="157.33" x2="974.7" y2="157.33" stroke="#c6979f" stroke-width="1.15"/><line x1="974.7" y1="156.13" x2="974.7" y2="158.53" stroke="#b08a90" stroke-width="0.8"/><line x1="720.6" y1="155.83" x2="720.6" y2="158.83" stroke="#a08890" stroke-width="0.8"/><path d="M722.6 155.73 L725.8000000000001 158.93 M725.8000000000001 155.73 L722.6 158.93" stroke="#2020e0" stroke-width="1.1"/><rect x="717.3" y="164.30" width="280.7" height="7.5" fill="#ffb1c1"/><rect x="717.3" y="164.30" width="280.7" height="0.9" fill="#f5a8a2"/><rect x="717.3" y="171.00" width="280.7" height="0.9" fill="#f5a8a2"/><rect x="717.3" y="171.90" width="20.7" height="2.78" fill="#dcf0dc"/><rect x="738" y="171.90" width="20.2" height="2.78" fill="#fff2d0"/><rect x="758.2" y="171.90" width="240" height="2.78" fill="#ffd8d8"/><line x1="721" y1="167.70" x2="966" y2="167.70" stroke="#c6979f" stroke-width="1.15"/><line x1="966" y1="166.50" x2="966" y2="168.90" stroke="#b08a90" stroke-width="0.8"/><line x1="720.6" y1="166.20" x2="720.6" y2="169.20" stroke="#a08890" stroke-width="0.8"/><rect x="717.3" y="174.68" width="280.7" height="7.5" fill="#ffb1c1"/><rect x="717.3" y="174.68" width="280.7" height="0.9" fill="#f5a8a2"/><rect x="717.3" y="181.38" width="280.7" height="0.9" fill="#f5a8a2"/><rect x="717.3" y="182.28" width="20.7" height="2.78" fill="#dcf0dc"/><rect x="738" y="182.28" width="20.2" height="2.78" fill="#fff2d0"/><rect x="758.2" y="182.28" width="240" height="2.78" fill="#ffd8d8"/><line x1="721" y1="178.08" x2="955.3" y2="178.08" stroke="#c6979f" stroke-width="1.15"/><line x1="955.3" y1="176.88" x2="955.3" y2="179.28" stroke="#b08a90" stroke-width="0.8"/><line x1="720.6" y1="176.58" x2="720.6" y2="179.58" stroke="#a08890" stroke-width="0.8"/><path d="M721.0 176.48 L724.2 179.68 M724.2 176.48 L721.0 179.68" stroke="#2020e0" stroke-width="1.1"/><rect x="717.3" y="185.05" width="280.7" height="7.5" fill="#ffb1c1"/><rect x="717.3" y="185.05" width="280.7" height="0.9" fill="#f5a8a2"/><rect x="717.3" y="191.75" width="280.7" height="0.9" fill="#f5a8a2"/><rect x="717.3" y="192.65" width="20.7" height="2.78" fill="#dcf0dc"/><rect x="738" y="192.65" width="20.2" height="2.78" fill="#fff2d0"/><rect x="758.2" y="192.65" width="240" height="2.78" fill="#ffd8d8"/><line x1="721" y1="188.45" x2="960.2" y2="188.45" stroke="#c6979f" stroke-width="1.15"/><line x1="960.2" y1="187.25" x2="960.2" y2="189.65" stroke="#b08a90" stroke-width="0.8"/><line x1="720.6" y1="186.95" x2="720.6" y2="189.95" stroke="#a08890" stroke-width="0.8"/><path d="M723.4 186.85 L726.6 190.05 M726.6 186.85 L723.4 190.05" stroke="#2020e0" stroke-width="1.1"/><polyline points="727.5,84.70 728.1,95.08 730.2,105.45 731.1,115.83 731.6,126.20 730.6,136.58 729.8,146.95 729.0,157.33 730.3,167.70 729.8,178.08 729.0,188.45" fill="none" stroke="#f03c3c" stroke-width="0.9"/><circle cx="727.5" cy="84.70" r="1.9" fill="#d8c8cc" stroke="#f23a3a" stroke-width="1"/><circle cx="728.1" cy="95.08" r="1.9" fill="#d8c8cc" stroke="#f23a3a" stroke-width="1"/><circle cx="730.2" cy="105.45" r="1.9" fill="#d8c8cc" stroke="#f23a3a" stroke-width="1"/><circle cx="731.1" cy="115.83" r="1.9" fill="#d8c8cc" stroke="#f23a3a" stroke-width="1"/><circle cx="731.6" cy="126.20" r="1.9" fill="#d8c8cc" stroke="#f23a3a" stroke-width="1"/><circle cx="730.6" cy="136.58" r="1.9" fill="#d8c8cc" stroke="#f23a3a" stroke-width="1"/><circle cx="729.8" cy="146.95" r="1.9" fill="#d8c8cc" stroke="#f23a3a" stroke-width="1"/><circle cx="729.0" cy="157.33" r="1.9" fill="#d8c8cc" stroke="#f23a3a" stroke-width="1"/><circle cx="730.3" cy="167.70" r="1.9" fill="#d8c8cc" stroke="#f23a3a" stroke-width="1"/><circle cx="729.8" cy="178.08" r="1.9" fill="#d8c8cc" stroke="#f23a3a" stroke-width="1"/><circle cx="729.0" cy="188.45" r="1.9" fill="#d8c8cc" stroke="#f23a3a" stroke-width="1"/></svg>
<div class="t" style="left:718.5px;top:71.00px;font-size:5.2px;line-height:6.24px;color:#444;font-weight:normal;transform-origin:0 50%;transform:scaleX(0.9333);-webkit-text-stroke:0.08px #444;">0 ms</div>
<div class="t" style="left:847.4px;top:70.00px;font-size:6.8px;line-height:8.16px;color:#222;font-weight:normal;transform-origin:0 50%;transform:scaleX(0.8861);-webkit-text-stroke:0.2px #222;">Latency</div>
<div class="t" style="right:1.80px;top:71.00px;font-size:5.2px;line-height:6.24px;color:#444;font-weight:normal;transform-origin:100% 50%;transform:scaleX(0.9645);-webkit-text-stroke:0.08px #444;">1386 ms</div>
<div class="b" style="left:998px;top:47px;width:1px;height:147px;background:#a8a8a8"></div>
<div class="b" style="left:1.2px;top:193.7px;width:998px;height:1.1px;background:#4e4e4e"></div>
<div class="b" style="left:1.2px;top:194.8px;width:998px;height:108.4px;background:#d3d3d3"></div>
<div class="t" style="right:947.20px;top:195.00px;font-size:7px;line-height:8.40px;color:#22307a;font-weight:normal;transform-origin:100% 50%;transform:scaleX(0.8600);-webkit-text-stroke:0.2px #22307a;">239</div>
<div class="t" style="right:380.00px;top:195.00px;font-size:6.8px;line-height:8.16px;color:#22307a;font-weight:bold;transform-origin:100% 50%;transform:scaleX(0.8828);-webkit-text-stroke:0.2px #22307a;">Round Trip (ms)</div>
<div class="t" style="right:355.90px;top:195.00px;font-size:7px;line-height:8.40px;color:#22307a;font-weight:normal;transform-origin:100% 50%;transform:scaleX(0.8600);-webkit-text-stroke:0.2px #22307a;">57,3</div>
<div class="t" style="right:332.80px;top:195.00px;font-size:7px;line-height:8.40px;color:#22307a;font-weight:normal;transform-origin:100% 50%;transform:scaleX(0.8600);-webkit-text-stroke:0.2px #22307a;">15,0</div>
<div class="t" style="right:309.10px;top:195.00px;font-size:7px;line-height:8.40px;color:#22307a;font-weight:normal;transform-origin:100% 50%;transform:scaleX(0.8600);-webkit-text-stroke:0.2px #22307a;">38,0</div>
<div class="t" style="right:286.00px;top:195.00px;font-size:7px;line-height:8.40px;color:#22307a;font-weight:normal;transform-origin:100% 50%;transform:scaleX(0.8600);-webkit-text-stroke:0.2px #22307a;">42,7</div>
<div class="t" style="right:4.70px;top:196.00px;font-size:6.6px;line-height:7.92px;color:#22307a;font-weight:normal;transform-origin:100% 50%;transform:scaleX(0.8880);-webkit-text-stroke:0.2px #22307a;">Focus: 20:42:46 - 20:52:46</div>
<div class="b" style="left:0px;top:303.2px;width:999px;height:237.8px;background:#f4f4f4"></div>
<div class="b" style="left:0px;top:303.2px;width:1.1px;height:237.8px;background:#a4a4a4"></div>
<div class="b" style="left:997.5px;top:303.2px;width:1.5px;height:237.8px;background:#d4d4d4"></div>
<div class="b" style="left:0px;top:539.5px;width:999px;height:1.5px;background:#d0d0d0"></div>
<div class="b" style="left:493.2px;top:303.9px;width:2.2px;height:2.2px;border-radius:50%;background:#606060"></div>
<div class="b" style="left:498.29999999999995px;top:303.9px;width:2.2px;height:2.2px;border-radius:50%;background:#606060"></div>
<div class="b" style="left:503.4px;top:303.9px;width:2.2px;height:2.2px;border-radius:50%;background:#606060"></div>
<svg class="b" style="left:0;top:0" width="999" height="541" viewBox="0 0 999 541"><rect x="15.6" y="313.7" width="967.5" height="180.76" fill="#ffd2d0"/><rect x="15.6" y="494.46" width="967.5" height="17.72" fill="#ffead0"/><rect x="15.6" y="512.18" width="967.5" height="17.72" fill="#ddedd6"/><line x1="15.6" y1="459.01" x2="983.1" y2="459.01" stroke="#e8c0bc" stroke-width="0.6"/><line x1="15.6" y1="423.57" x2="983.1" y2="423.57" stroke="#e8c0bc" stroke-width="0.6"/><line x1="15.6" y1="388.13" x2="983.1" y2="388.13" stroke="#e8c0bc" stroke-width="0.6"/><line x1="15.6" y1="352.69" x2="983.1" y2="352.69" stroke="#e8c0bc" stroke-width="0.6"/><path d="M16 521.4 H19.6 V523.6 H22.8 V526.4 H28 V524.6 H32 V524.6 H38.2 V526 H44 V523.8 H47.6 V526.4 H55.8 V526.4 H62.7 V522.2 H68 V522.2 H70.2 V516 H75.6 V526 H80 V526 H86.5 V523.4 H91.7 V526.4 H96.5 V525.3 H100.4 V316.25 H103.6 V426.5 H107.75 V509.3 H112.2 V509.3 H115.2 V526.4 H120.5 V517.5 H124 V526.4 H128.3 V526.4 H131.5 V517.5 H136.2 V522.5 H140 V524.6 H144.8 V492.1 H148.7 V525.4 H152.6 V518.2 H156 V525.1 H161.3 V524.5 H169 V523 H173 V511.2 H176.5 V526.2 H181.2 V525.1 H184.7 V522.2 H188.8 V522.2 H191.7 V468.2 H197.2 V521.8 H205.2 V473.7 H208.9 V508.1 H213.2 V523.2 H217.6 V503 H220.6 V525.2 H225.2 V524.5 H232.2 V525.4 H236.9 V524.5 H241 V524.5 H244.2 V519.2 H248.8 V522.2 H253.2 V526.5 H261.8 V526.5 H263.9 V524.2 H269 V525.2 H274 V526 H286 V524.5 H289.8 V524.5 H292.7 V526 H298 V523.5 H301.5 V524.8 H305.8 V524.8 H308.7 V525.5 H314.5 V522.5 H318 V524.2 H326 V526.5 H330.5 V523.5 H333.5 V526.5 H338.5 V525.5 H342 V525.5 H345.5 V522.5 H349.5 V522.5 H361.7 V526.2 H366.5 V527 H370.5 V524 H374.5 V521.5 H378.8 V521.5 H385.5 V523.2 H391 V524 H394.5 V526.5 H399 V522.5 H402.5 V525.2 H406.5 V526.5 H411 V526.5 H413.5 V522.2 H418 V526.5 H423 V524.5 H427 V524.5 H429.5 V519 H434.8 V519 H441.7 V504.3 H447 V504.3 H449.5 V497.5 H455 V507 H459 V507 H461.5 V521 H467 V523.8 H472 V522.8 H478.5 V526 H483.2 V526 H486.2 V526.2 H492 V525.5 H495.8 V525.5 H502.7 V525.8 H507.8 V525.8 H518.7 V519.5 H523.5 V524.5 H528.5 V522.5 H531.5 V523.2 H535.8 V523.2 H538.7 V519.4 H543.5 V522.3 H547.8 V522.3 H550.5 V521.3 H555.8 V521.3 H559.2 V527 H564.4 V515.4 H568 V515.4 H575.5 V496.5 H580 V496.5 H583.2 V526.6 H588.5 V526.6 H776.5 V525.2 H782 V525.2 H788.7 V526.4 H794 V526.4 H796.7 V524.6 H802 V524.6 H808.7 V524.3 H814 V524.3 H824.9000000000001 V525.6 H834.8 V525.6 H837.6 V526.4 H842.5 V520.4 H846.8 V520.4 H849.5 V526.2 H855 V515.8 H858 V523.2 H862.8 V523.2 H865.5 V520.2 H870.8 V524 H874.8 V524 H877.6 V521 H882.8 V526 H887 V521 H890.8 V521 H893.5 V520.2 H898.8 V526.2 H911.5 V524 H915 V524 H917.7 V526.2 H923.2 V519.2 H926.5 V524.8 H931.5 V521.2 H935.5 V517.2 H939 V517.2 H941.9000000000001 V525.7 H945.4 V526.3 H951.9 V521.6 H954.8 V525.7 H959.6 V523.4 H963.1 V525.1 H967.2 V526.3 H971.2 V526.3 H978.6 V523.4 H983.1 V523.4" fill="none" stroke="#262626" stroke-width="1.05"/><rect x="30.70" y="313.7" width="1.3" height="216.20" fill="#fff" fill-opacity="0.4"/><rect x="39.50" y="313.7" width="1.3" height="216.20" fill="#fff" fill-opacity="0.4"/><rect x="54.50" y="313.7" width="1.3" height="216.20" fill="#fff" fill-opacity="0.4"/><rect x="64.00" y="313.7" width="1.3" height="216.20" fill="#fff" fill-opacity="0.4"/><rect x="66.70" y="313.7" width="1.3" height="216.20" fill="#fff" fill-opacity="0.4"/><rect x="71.50" y="313.7" width="1.3" height="216.20" fill="#fff" fill-opacity="0.4"/><rect x="78.70" y="313.7" width="1.3" height="216.20" fill="#fff" fill-opacity="0.4"/><rect x="87.80" y="313.7" width="1.3" height="216.20" fill="#fff" fill-opacity="0.4"/><rect x="110.90" y="313.7" width="1.3" height="216.20" fill="#fff" fill-opacity="0.4"/><rect x="116.50" y="313.7" width="1.3" height="216.20" fill="#fff" fill-opacity="0.4"/><rect x="127.00" y="313.7" width="1.3" height="216.20" fill="#fff" fill-opacity="0.4"/><rect x="132.80" y="313.7" width="1.3" height="216.20" fill="#fff" fill-opacity="0.4"/><rect x="187.50" y="313.7" width="1.3" height="216.20" fill="#fff" fill-opacity="0.4"/><rect x="193.00" y="313.7" width="1.3" height="216.20" fill="#fff" fill-opacity="0.4"/><rect x="239.70" y="313.7" width="1.3" height="216.20" fill="#fff" fill-opacity="0.4"/><rect x="245.50" y="313.7" width="1.3" height="216.20" fill="#fff" fill-opacity="0.4"/><rect x="260.50" y="313.7" width="1.3" height="216.20" fill="#fff" fill-opacity="0.4"/><rect x="265.20" y="313.7" width="1.3" height="216.20" fill="#fff" fill-opacity="0.4"/><rect x="288.50" y="313.7" width="1.3" height="216.20" fill="#fff" fill-opacity="0.4"/><rect x="294.00" y="313.7" width="1.3" height="216.20" fill="#fff" fill-opacity="0.4"/><rect x="304.50" y="313.7" width="1.3" height="216.20" fill="#fff" fill-opacity="0.4"/><rect x="310.00" y="313.7" width="1.3" height="216.20" fill="#fff" fill-opacity="0.4"/><rect x="340.70" y="313.7" width="1.3" height="216.20" fill="#fff" fill-opacity="0.4"/><rect x="346.80" y="313.7" width="1.3" height="216.20" fill="#fff" fill-opacity="0.4"/><rect x="348.20" y="313.7" width="1.3" height="216.20" fill="#fff" fill-opacity="0.4"/><rect x="363.00" y="313.7" width="1.3" height="216.20" fill="#fff" fill-opacity="0.4"/><rect x="377.50" y="313.7" width="1.3" height="216.20" fill="#fff" fill-opacity="0.4"/><rect x="386.80" y="313.7" width="1.3" height="216.20" fill="#fff" fill-opacity="0.4"/><rect x="409.70" y="313.7" width="1.3" height="216.20" fill="#fff" fill-opacity="0.4"/><rect x="414.80" y="313.7" width="1.3" height="216.20" fill="#fff" fill-opacity="0.4"/><rect x="425.70" y="313.7" width="1.3" height="216.20" fill="#fff" fill-opacity="0.4"/><rect x="430.80" y="313.7" width="1.3" height="216.20" fill="#fff" fill-opacity="0.4"/><rect x="433.50" y="313.7" width="1.3" height="216.20" fill="#fff" fill-opacity="0.4"/><rect x="443.00" y="313.7" width="1.3" height="216.20" fill="#fff" fill-opacity="0.4"/><rect x="445.70" y="313.7" width="1.3" height="216.20" fill="#fff" fill-opacity="0.4"/><rect x="450.80" y="313.7" width="1.3" height="216.20" fill="#fff" fill-opacity="0.4"/><rect x="457.70" y="313.7" width="1.3" height="216.20" fill="#fff" fill-opacity="0.4"/><rect x="462.80" y="313.7" width="1.3" height="216.20" fill="#fff" fill-opacity="0.4"/><rect x="481.90" y="313.7" width="1.3" height="216.20" fill="#fff" fill-opacity="0.4"/><rect x="487.50" y="313.7" width="1.3" height="216.20" fill="#fff" fill-opacity="0.4"/><rect x="494.50" y="313.7" width="1.3" height="216.20" fill="#fff" fill-opacity="0.4"/><rect x="504.00" y="313.7" width="1.3" height="216.20" fill="#fff" fill-opacity="0.4"/><rect x="506.50" y="313.7" width="1.3" height="216.20" fill="#fff" fill-opacity="0.4"/><rect x="520.00" y="313.7" width="1.3" height="216.20" fill="#fff" fill-opacity="0.4"/><rect x="534.50" y="313.7" width="1.3" height="216.20" fill="#fff" fill-opacity="0.4"/><rect x="540.00" y="313.7" width="1.3" height="216.20" fill="#fff" fill-opacity="0.4"/><rect x="546.50" y="313.7" width="1.3" height="216.20" fill="#fff" fill-opacity="0.4"/><rect x="551.80" y="313.7" width="1.3" height="216.20" fill="#fff" fill-opacity="0.4"/><rect x="554.50" y="313.7" width="1.3" height="216.20" fill="#fff" fill-opacity="0.4"/><rect x="560.50" y="313.7" width="1.3" height="216.20" fill="#fff" fill-opacity="0.4"/><rect x="566.70" y="313.7" width="1.3" height="216.20" fill="#fff" fill-opacity="0.4"/><rect x="576.80" y="313.7" width="1.3" height="216.20" fill="#fff" fill-opacity="0.4"/><rect x="578.70" y="313.7" width="1.3" height="216.20" fill="#fff" fill-opacity="0.4"/><rect x="584.50" y="313.7" width="1.3" height="216.20" fill="#fff" fill-opacity="0.4"/><rect x="587.20" y="313.7" width="1.3" height="216.20" fill="#fff" fill-opacity="0.4"/><rect x="777.80" y="313.7" width="1.3" height="216.20" fill="#fff" fill-opacity="0.4"/><rect x="780.70" y="313.7" width="1.3" height="216.20" fill="#fff" fill-opacity="0.4"/><rect x="790.00" y="313.7" width="1.3" height="216.20" fill="#fff" fill-opacity="0.4"/><rect x="792.70" y="313.7" width="1.3" height="216.20" fill="#fff" fill-opacity="0.4"/><rect x="798.00" y="313.7" width="1.3" height="216.20" fill="#fff" fill-opacity="0.4"/><rect x="800.70" y="313.7" width="1.3" height="216.20" fill="#fff" fill-opacity="0.4"/><rect x="810.00" y="313.7" width="1.3" height="216.20" fill="#fff" fill-opacity="0.4"/><rect x="812.70" y="313.7" width="1.3" height="216.20" fill="#fff" fill-opacity="0.4"/><rect x="826.20" y="313.7" width="1.3" height="216.20" fill="#fff" fill-opacity="0.4"/><rect x="833.50" y="313.7" width="1.3" height="216.20" fill="#fff" fill-opacity="0.4"/><rect x="838.90" y="313.7" width="1.3" height="216.20" fill="#fff" fill-opacity="0.4"/><rect x="845.30" y="313.7" width="1.3" height="216.20" fill="#fff" fill-opacity="0.4"/><rect x="850.80" y="313.7" width="1.3" height="216.20" fill="#fff" fill-opacity="0.4"/><rect x="861.50" y="313.7" width="1.3" height="216.20" fill="#fff" fill-opacity="0.4"/><rect x="866.80" y="313.7" width="1.3" height="216.20" fill="#fff" fill-opacity="0.4"/><rect x="873.50" y="313.7" width="1.3" height="216.20" fill="#fff" fill-opacity="0.4"/><rect x="878.90" y="313.7" width="1.3" height="216.20" fill="#fff" fill-opacity="0.4"/><rect x="889.50" y="313.7" width="1.3" height="216.20" fill="#fff" fill-opacity="0.4"/><rect x="894.80" y="313.7" width="1.3" height="216.20" fill="#fff" fill-opacity="0.4"/><rect x="913.70" y="313.7" width="1.3" height="216.20" fill="#fff" fill-opacity="0.4"/><rect x="919.00" y="313.7" width="1.3" height="216.20" fill="#fff" fill-opacity="0.4"/><rect x="937.70" y="313.7" width="1.3" height="216.20" fill="#fff" fill-opacity="0.4"/><rect x="943.20" y="313.7" width="1.3" height="216.20" fill="#fff" fill-opacity="0.4"/><rect x="969.90" y="313.7" width="1.3" height="216.20" fill="#fff" fill-opacity="0.4"/><rect x="979.90" y="313.7" width="1.3" height="216.20" fill="#fff" fill-opacity="0.4"/><rect x="32" y="313.7" width="7.50" height="216.20" fill="#ff0000"/><rect x="55.8" y="313.7" width="8.20" height="216.20" fill="#ff0000"/><rect x="68" y="313.7" width="3.50" height="216.20" fill="#ff0000"/><rect x="80" y="313.7" width="7.80" height="216.20" fill="#ff0000"/><rect x="112.2" y="313.7" width="4.30" height="216.20" fill="#ff0000"/><rect x="128.3" y="313.7" width="4.50" height="216.20" fill="#ff0000"/><rect x="188.8" y="313.7" width="4.20" height="216.20" fill="#ff0000"/><rect x="241" y="313.7" width="4.50" height="216.20" fill="#ff0000"/><rect x="261.8" y="313.7" width="3.40" height="216.20" fill="#ff0000"/><rect x="289.8" y="313.7" width="4.20" height="216.20" fill="#ff0000"/><rect x="305.8" y="313.7" width="4.20" height="216.20" fill="#ff0000"/><rect x="342" y="313.7" width="4.80" height="216.20" fill="#ff0000"/><rect x="349.5" y="313.7" width="13.50" height="216.20" fill="#ff0000"/><rect x="378.8" y="313.7" width="8.00" height="216.20" fill="#ff0000"/><rect x="411" y="313.7" width="3.80" height="216.20" fill="#ff0000"/><rect x="427" y="313.7" width="3.80" height="216.20" fill="#ff0000"/><rect x="434.8" y="313.7" width="8.20" height="216.20" fill="#ff0000"/><rect x="447" y="313.7" width="3.80" height="216.20" fill="#ff0000"/><rect x="459" y="313.7" width="3.80" height="216.20" fill="#ff0000"/><rect x="483.2" y="313.7" width="4.30" height="216.20" fill="#ff0000"/><rect x="495.8" y="313.7" width="8.20" height="216.20" fill="#ff0000"/><rect x="507.8" y="313.7" width="12.20" height="216.20" fill="#ff0000"/><rect x="535.8" y="313.7" width="4.20" height="216.20" fill="#ff0000"/><rect x="547.8" y="313.7" width="4.00" height="216.20" fill="#ff0000"/><rect x="555.8" y="313.7" width="4.70" height="216.20" fill="#ff0000"/><rect x="568" y="313.7" width="8.80" height="216.20" fill="#ff0000"/><rect x="580" y="313.7" width="4.50" height="216.20" fill="#ff0000"/><rect x="588.5" y="313.7" width="189.30" height="216.20" fill="#ff0000"/><rect x="782" y="313.7" width="8.00" height="216.20" fill="#ff0000"/><rect x="794" y="313.7" width="4.00" height="216.20" fill="#ff0000"/><rect x="802" y="313.7" width="8.00" height="216.20" fill="#ff0000"/><rect x="814" y="313.7" width="12.20" height="216.20" fill="#ff0000"/><rect x="834.8" y="313.7" width="4.10" height="216.20" fill="#ff0000"/><rect x="846.6" y="313.7" width="4.20" height="216.20" fill="#ff0000"/><rect x="862.8" y="313.7" width="4.00" height="216.20" fill="#ff0000"/><rect x="874.8" y="313.7" width="4.10" height="216.20" fill="#ff0000"/><rect x="890.8" y="313.7" width="4.00" height="216.20" fill="#ff0000"/><rect x="915" y="313.7" width="4.00" height="216.20" fill="#ff0000"/><rect x="939" y="313.7" width="4.20" height="216.20" fill="#ff0000"/><rect x="971.2" y="313.7" width="8.70" height="216.20" fill="#ff0000"/><line x1="15.6" y1="313.7" x2="15.6" y2="529.9" stroke="#9c9c9c" stroke-width="0.8"/><line x1="15.6" y1="530.1999999999999" x2="983.1" y2="530.1999999999999" stroke="#9c9c9c" stroke-width="0.8"/></svg>
<div class="t" style="left:15.5px;top:307.00px;font-size:6.0px;line-height:7.20px;color:#404040;font-weight:normal;transform-origin:0 50%;transform:scaleX(0.9290);-webkit-text-stroke:0.06px #404040;">www.vodafone.de (139.7.147.41) hop 11</div>
<div class="t" style="right:23.70px;top:307.00px;font-size:6.0px;line-height:7.20px;color:#404040;font-weight:normal;transform-origin:100% 50%;transform:scaleX(0.9120);-webkit-text-stroke:0.06px #404040;">10 minutes (20:42:46 - 20:52:46)</div>
<svg class="b" style="left:977px;top:306.5px" width="8" height="8" viewBox="0 0 8 8"><circle cx="3.8" cy="3.6" r="3" fill="#e4e4e4" stroke="#cfcfcf" stroke-width="0.5"/><path d="M2.5 3 L3.8 4.3 L5.1 3" fill="none" stroke="#777" stroke-width="0.6"/></svg>
<div class="t" style="right:985.00px;top:312.00px;font-size:6.0px;line-height:7.20px;color:#555;font-weight:normal;transform-origin:100% 50%;transform:scaleX(0.8833);">1220</div>
<div class="t" style="right:985.00px;top:524.00px;font-size:6.0px;line-height:7.20px;color:#505050;font-weight:normal;transform-origin:100% 50%;transform:scaleX(0.8600);-webkit-text-stroke:0.04px #505050;">0</div>
<div class="t" style="left:984px;top:314.00px;font-size:6.0px;line-height:7.20px;color:#b04040;font-weight:normal;transform-origin:0 50%;transform:scaleX(0.9271);-webkit-text-stroke:0.04px #b04040;">30</div>
<div class="t" style="left:16.5px;top:495.00px;font-size:6.0px;line-height:7.20px;color:rgba(0,0,0,0.10);font-weight:normal;transform-origin:0 50%;transform:scaleX(0.8600);-webkit-text-stroke:0.2px rgba(0,0,0,0.10);">200 ms</div>
<div class="t" style="left:16.5px;top:460.00px;font-size:6.0px;line-height:7.20px;color:rgba(0,0,0,0.10);font-weight:normal;transform-origin:0 50%;transform:scaleX(0.8600);-webkit-text-stroke:0.2px rgba(0,0,0,0.10);">400 ms</div>
<div class="t" style="left:16.5px;top:424.00px;font-size:6.0px;line-height:7.20px;color:rgba(0,0,0,0.10);font-weight:normal;transform-origin:0 50%;transform:scaleX(0.8600);-webkit-text-stroke:0.2px rgba(0,0,0,0.10);">600 ms</div>
<div class="t" style="left:16.5px;top:389.00px;font-size:6.0px;line-height:7.20px;color:rgba(0,0,0,0.10);font-weight:normal;transform-origin:0 50%;transform:scaleX(0.8600);-webkit-text-stroke:0.2px rgba(0,0,0,0.10);">800 ms</div>
<div class="t" style="left:16.5px;top:353.00px;font-size:6.0px;line-height:7.20px;color:rgba(0,0,0,0.10);font-weight:normal;transform-origin:0 50%;transform:scaleX(0.8600);-webkit-text-stroke:0.2px rgba(0,0,0,0.10);">1000 ms</div>
<div class="t" style="left:-28.4px;top:419.4px;width:80px;text-align:center;font-size:5.3px;line-height:7px;color:#333;transform:rotate(-90deg)">Latency (ms)</div>
<div class="t" style="left:946.9px;top:422.5px;width:80px;text-align:center;font-size:5.3px;line-height:7px;color:#c04040;transform:rotate(90deg)">Packet Loss %</div>
<div class="t" style="left:39.6px;top:531.00px;font-size:6.0px;line-height:7.20px;color:#4e664e;font-weight:normal;transform-origin:0 50%;transform:scaleX(0.8904);-webkit-text-stroke:0.12px #4e664e;">20:43:00</div>
<div class="t" style="left:87.95px;top:531.00px;font-size:6.0px;line-height:7.20px;color:#4e664e;font-weight:normal;transform-origin:0 50%;transform:scaleX(0.8904);-webkit-text-stroke:0.12px #4e664e;">20:43:30</div>
<div class="t" style="left:136.3px;top:531.00px;font-size:6.0px;line-height:7.20px;color:#4e664e;font-weight:normal;transform-origin:0 50%;transform:scaleX(0.8904);-webkit-text-stroke:0.12px #4e664e;">20:44:00</div>
<div class="t" style="left:184.65px;top:531.00px;font-size:6.0px;line-height:7.20px;color:#4e664e;font-weight:normal;transform-origin:0 50%;transform:scaleX(0.8904);-webkit-text-stroke:0.12px #4e664e;">20:44:30</div>
<div class="t" style="left:233.0px;top:531.00px;font-size:6.0px;line-height:7.20px;color:#4e664e;font-weight:normal;transform-origin:0 50%;transform:scaleX(0.8904);-webkit-text-stroke:0.12px #4e664e;">20:45:00</div>
<div class="t" style="left:281.35px;top:531.00px;font-size:6.0px;line-height:7.20px;color:#4e664e;font-weight:normal;transform-origin:0 50%;transform:scaleX(0.8904);-webkit-text-stroke:0.12px #4e664e;">20:45:30</div>
<div class="t" style="left:329.70000000000005px;top:531.00px;font-size:6.0px;line-height:7.20px;color:#4e664e;font-weight:normal;transform-origin:0 50%;transform:scaleX(0.8904);-webkit-text-stroke:0.12px #4e664e;">20:46:00</div>
<div class="t" style="left:378.05px;top:531.00px;font-size:6.0px;line-height:7.20px;color:#4e664e;font-weight:normal;transform-origin:0 50%;transform:scaleX(0.8904);-webkit-text-stroke:0.12px #4e664e;">20:46:30</div>
<div class="t" style="left:426.40000000000003px;top:531.00px;font-size:6.0px;line-height:7.20px;color:#4e664e;font-weight:normal;transform-origin:0 50%;transform:scaleX(0.8904);-webkit-text-stroke:0.12px #4e664e;">20:47:00</div>
<div class="t" style="left:474.75000000000006px;top:531.00px;font-size:6.0px;line-height:7.20px;color:#4e664e;font-weight:normal;transform-origin:0 50%;transform:scaleX(0.8904);-webkit-text-stroke:0.12px #4e664e;">20:47:30</div>
<div class="t" style="left:523.1px;top:531.00px;font-size:6.0px;line-height:7.20px;color:#4e664e;font-weight:normal;transform-origin:0 50%;transform:scaleX(0.8904);-webkit-text-stroke:0.12px #4e664e;">20:48:00</div>
<div class="t" style="left:571.45px;top:531.00px;font-size:6.0px;line-height:7.20px;color:#4e664e;font-weight:normal;transform-origin:0 50%;transform:scaleX(0.8904);-webkit-text-stroke:0.12px #4e664e;">20:48:30</div>
<div class="t" style="left:619.8000000000001px;top:531.00px;font-size:6.0px;line-height:7.20px;color:#4e664e;font-weight:normal;transform-origin:0 50%;transform:scaleX(0.8904);-webkit-text-stroke:0.12px #4e664e;">20:49:00</div>
<div class="t" style="left:668.1500000000001px;top:531.00px;font-size:6.0px;line-height:7.20px;color:#4e664e;font-weight:normal;transform-origin:0 50%;transform:scaleX(0.8904);-webkit-text-stroke:0.12px #4e664e;">20:49:30</div>
<div class="t" style="left:716.5px;top:531.00px;font-size:6.0px;line-height:7.20px;color:#4e664e;font-weight:normal;transform-origin:0 50%;transform:scaleX(0.8904);-webkit-text-stroke:0.12px #4e664e;">20:50:00</div>
<div class="t" style="left:764.85px;top:531.00px;font-size:6.0px;line-height:7.20px;color:#4e664e;font-weight:normal;transform-origin:0 50%;transform:scaleX(0.8904);-webkit-text-stroke:0.12px #4e664e;">20:50:30</div>
<div class="t" style="left:813.2px;top:531.00px;font-size:6.0px;line-height:7.20px;color:#4e664e;font-weight:normal;transform-origin:0 50%;transform:scaleX(0.8904);-webkit-text-stroke:0.12px #4e664e;">20:51:00</div>
<div class="t" style="left:861.5500000000001px;top:531.00px;font-size:6.0px;line-height:7.20px;color:#4e664e;font-weight:normal;transform-origin:0 50%;transform:scaleX(0.8904);-webkit-text-stroke:0.12px #4e664e;">20:51:30</div>
<div class="t" style="left:909.9000000000001px;top:531.00px;font-size:6.0px;line-height:7.20px;color:#4e664e;font-weight:normal;transform-origin:0 50%;transform:scaleX(0.8904);-webkit-text-stroke:0.12px #4e664e;">20:52:00</div>
<div class="t" style="left:958.25px;top:531.00px;font-size:6.0px;line-height:7.20px;color:#4e664e;font-weight:normal;transform-origin:0 50%;transform:scaleX(0.8904);-webkit-text-stroke:0.12px #4e664e;">20:52:30</div>
</body></html>
